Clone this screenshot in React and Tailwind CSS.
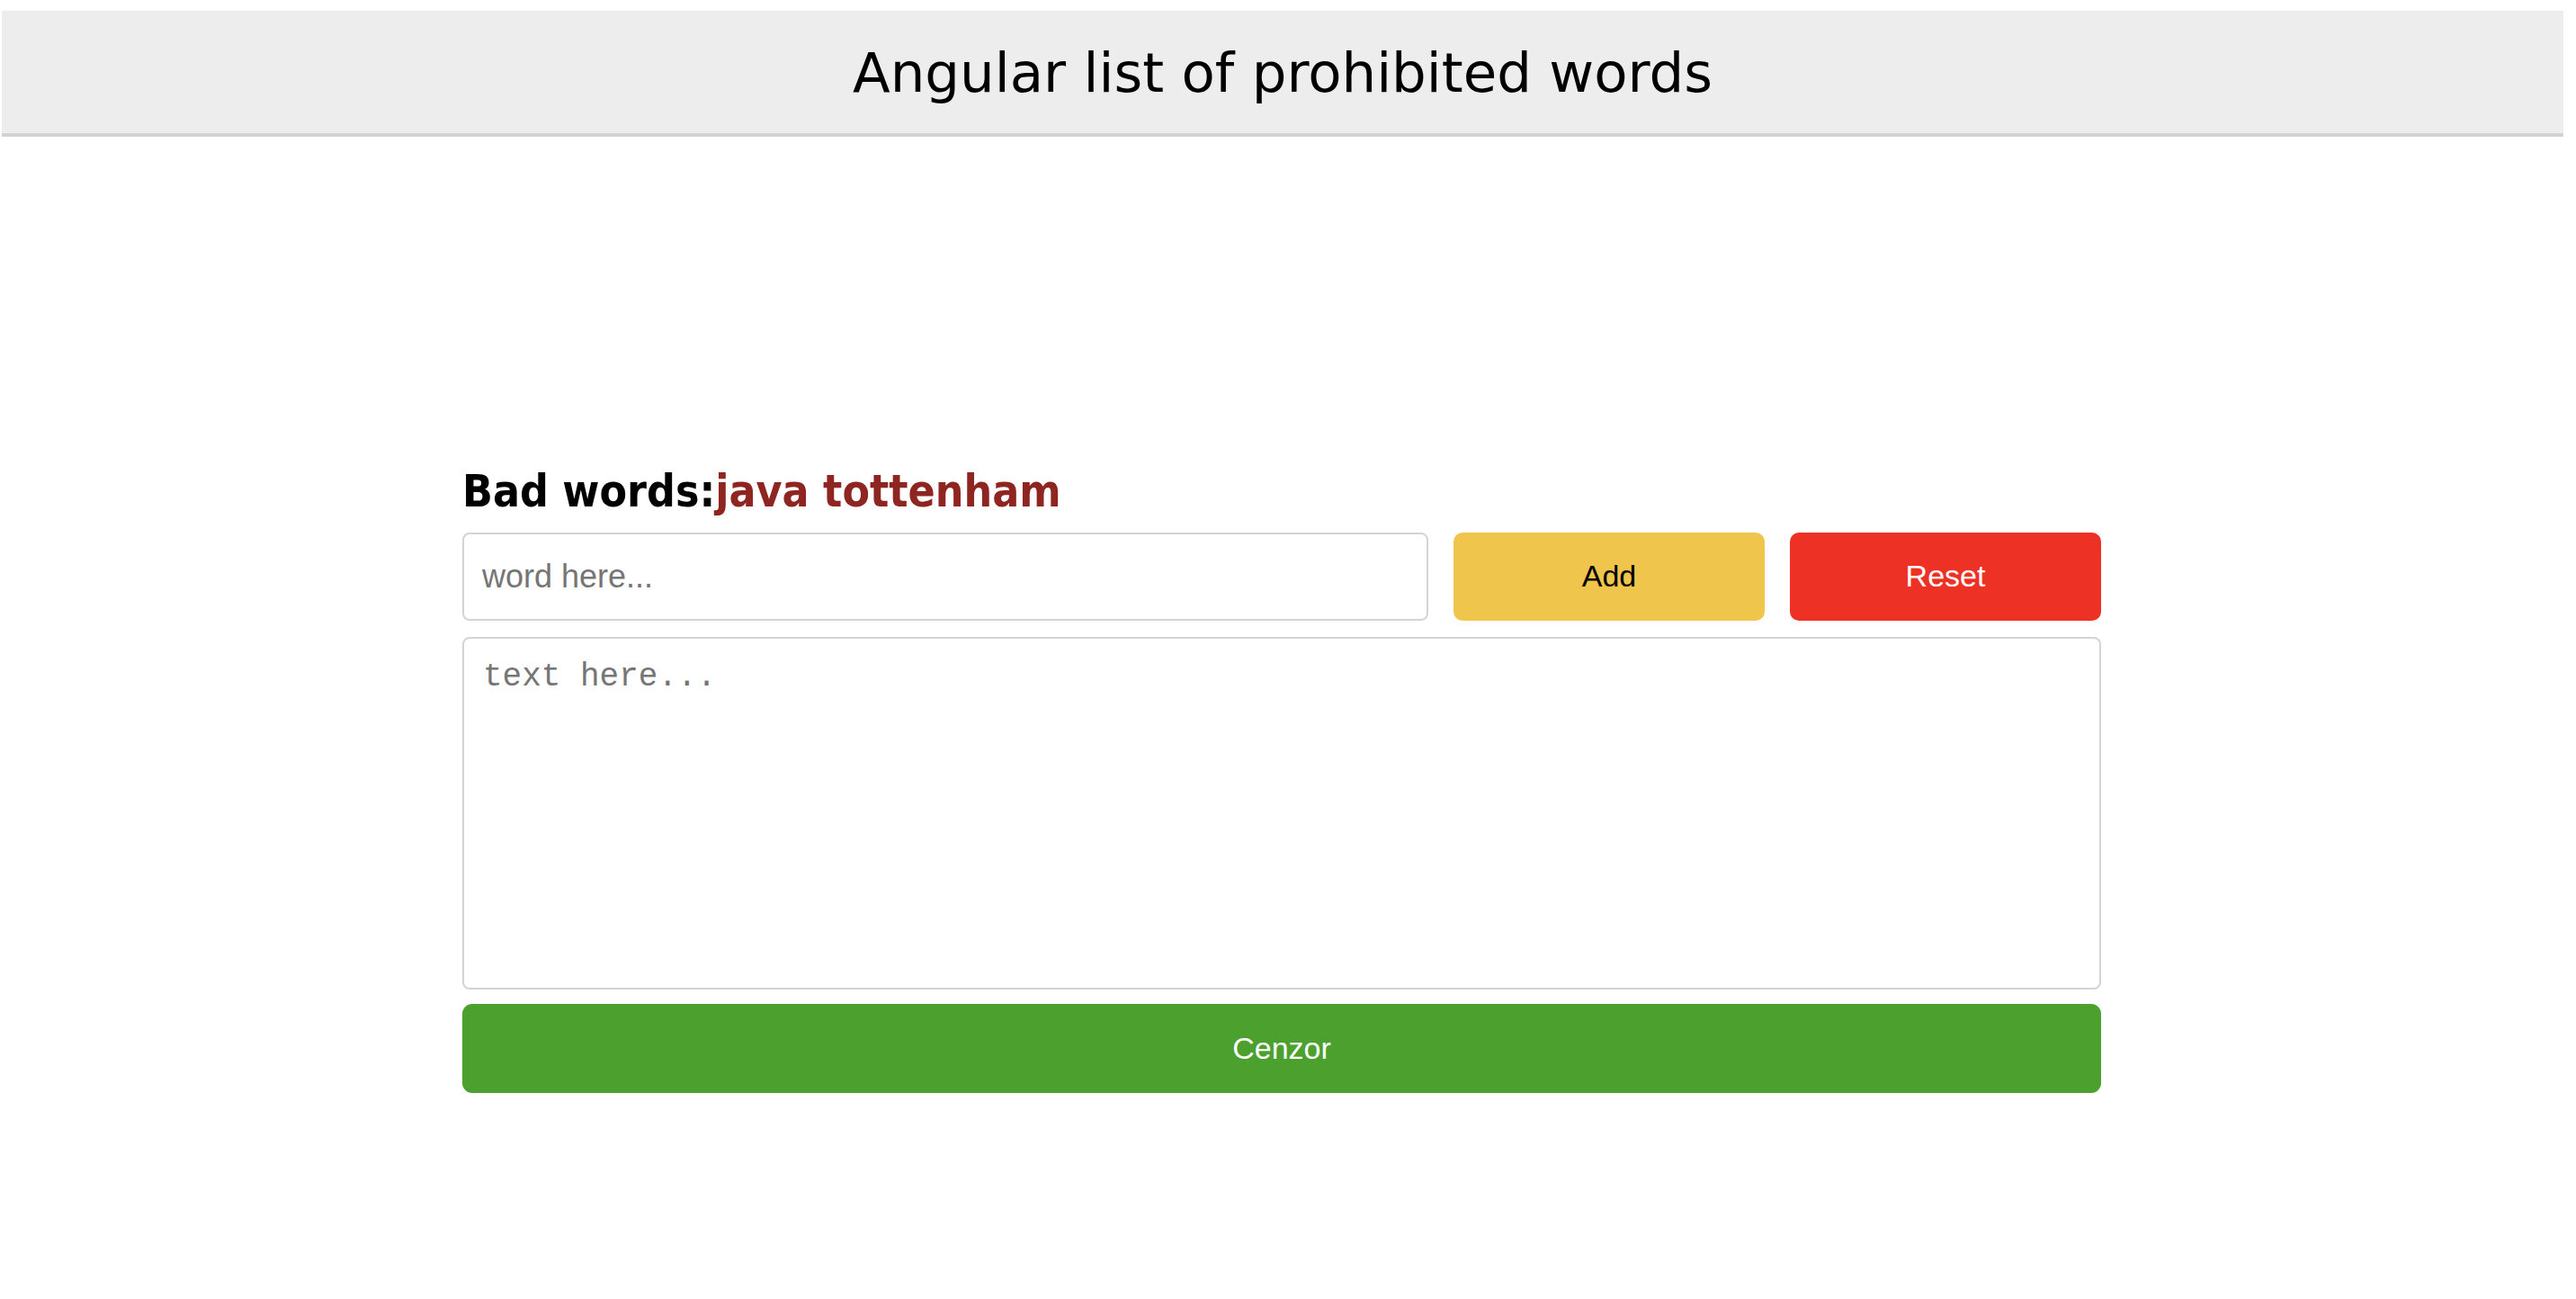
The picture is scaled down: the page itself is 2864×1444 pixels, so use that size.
import { useState } from 'react';

/**
 * Prohibited words censor page
 */
export default function App() {
  const [word, setWord] = useState('');
  const [text, setText] = useState('');
  const [badWords, setBadWords] = useState(['java', 'tottenham']);

  const addWord = () => {
    const w = word.trim();
    if (!w) return;
    setBadWords([...badWords, w]);
    setWord('');
  };

  const censor = () => {
    let out = text;
    badWords.forEach((w) => {
      out = out.split(w).join('*'.repeat(w.length));
    });
    setText(out);
  };

  return (
    <div className="w-[2850px] min-h-[1444px] bg-white pt-[12px]">
      {/* Header */}
      <header className="ml-[2px] h-[140px] flex items-center justify-center bg-[#ededed] border-b-[4px] border-[#d3d3d3]">
        <h1 className="text-[61px] text-black font-['DejaVu_Sans',sans-serif] leading-none">
          Angular list of prohibited words
        </h1>
      </header>

      {/* Main form */}
      <main className="w-[1822px] mx-auto pt-[370px]">
        <h2 className="text-[49.5px] leading-none font-bold font-['DejaVu_Sans_Condensed','DejaVu_Sans',sans-serif] text-black mb-[20px]">
          Bad words:<span className="text-[#8f2520]">{badWords.join(' ')}</span>
        </h2>

        <div className="flex gap-[28px] h-[98px]">
          <input
            type="text"
            value={word}
            onChange={(e) => setWord(e.target.value)}
            placeholder="word here..."
            className="flex-1 h-full px-[20px] border-2 border-[#d4d4d4] rounded-[8px] text-[36px] font-['Liberation_Sans',Arial,sans-serif] placeholder:text-[#757575] outline-none"
          />
          <button
            onClick={addWord}
            className="w-[346px] h-full rounded-[10px] bg-[#f0c54b] text-black text-[34px] font-['Liberation_Sans',Arial,sans-serif]"
          >
            Add
          </button>
          <button
            onClick={() => setBadWords([])}
            className="w-[346px] h-full rounded-[10px] bg-[#ed3124] text-white text-[34px] font-['Liberation_Sans',Arial,sans-serif]"
          >
            Reset
          </button>
        </div>

        <textarea
          value={text}
          onChange={(e) => setText(e.target.value)}
          placeholder="text here..."
          className="block w-full h-[392px] mt-[18px] px-[21px] pt-[16px] border-2 border-[#d4d4d4] rounded-[8px] resize-none text-[36px] leading-normal font-['Liberation_Mono','Courier_New',monospace] placeholder:text-[#757575] outline-none"
        />

        <button
          onClick={censor}
          className="block w-full h-[99px] mt-[16px] rounded-[11px] bg-[#4ba02e] text-white text-[34px] font-['Liberation_Sans',Arial,sans-serif]"
        >
          Cenzor
        </button>
      </main>
    </div>
  );
}
